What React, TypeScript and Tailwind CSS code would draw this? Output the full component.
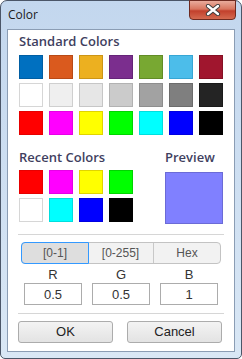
const standard = [
  ['bg-[#0070c0] border-[#005ea3]', 'bg-[#da5a1e] border-[#b84a16]', 'bg-[#ecb020] border-[#cc9516]', 'bg-[#7b2e8e] border-[#652478]', 'bg-[#78a832] border-[#628c26]', 'bg-[#4cbdea] border-[#36a6d4]', 'bg-[#a0162e] border-[#861024]'],
  ['bg-white border-[#d6d6d6]', 'bg-[#efefef] border-[#cfcfcf]', 'bg-[#e6e6e6] border-[#c6c6c6]', 'bg-[#cbcbcb] border-[#b2b2b2]', 'bg-[#a2a2a2] border-[#8e8e8e]', 'bg-[#7f7f7f] border-[#6c6c6c]', 'bg-[#242424] border-[#1a1a1a]'],
  ['bg-[#ff0000] border-[#e60000]', 'bg-[#ff00ff] border-[#e600e6]', 'bg-[#ffff00] border-[#e0d400]', 'bg-[#00ff00] border-[#00d400]', 'bg-[#00ffff] border-[#00dede]', 'bg-[#0000ff] border-[#0000e0]', 'bg-black border-black'],
]

const recent = [
  'bg-[#ff0000] border-[#e60000]', 'bg-[#ff00ff] border-[#e600e6]', 'bg-[#ffff00] border-[#e0d400]', 'bg-[#00ff00] border-[#00d400]',
  'bg-white border-[#d6d6d6]', 'bg-[#00ffff] border-[#00dede]', 'bg-[#0000ff] border-[#0000e0]', 'bg-black border-black',
]

function Swatch({ cls }: { cls: string }) {
  return <div className={`w-[24px] h-[24px] border ${cls}`} />
}

function Heading({ children }: { children: React.ReactNode }) {
  return (
    <div className="text-[13px] leading-[17px] font-semibold text-[#3f3f5f] font-['Open_Sans',sans-serif]">
      {children}
    </div>
  )
}

export default function App() {
  return (
    <div className="relative w-[242px] h-[359px] flex flex-col rounded-t-[7px] rounded-b-[5px] border border-[#4b5668] bg-[linear-gradient(to_bottom,#c3d7ee,#d9e7f5)] px-[6px] pb-[6px] font-['Liberation_Sans',Arial,sans-serif]">
      {/* title bar */}
      <div className="h-[28px] pl-[1px] pt-[6px] text-[12px] leading-[16px] text-[#1b1b1b] font-['Open_Sans',sans-serif]">
        Color
      </div>
      <div className="absolute top-[-1px] right-[5px] w-[47px] h-[20px] rounded-b-[4px] border border-[#6e2a20] bg-[linear-gradient(to_bottom,#e9ab9c_0%,#d8765f_45%,#c2402c_55%,#d46a50_100%)] flex items-center justify-center">
        <svg width="16" height="12" viewBox="0 0 16 12">
          <path d="M3 2 L13 10 M13 2 L3 10" stroke="#3b3b3b" strokeWidth="4.2" strokeLinecap="round" />
          <path d="M3 2 L13 10 M13 2 L3 10" stroke="#ffffff" strokeWidth="2.4" strokeLinecap="round" />
        </svg>
      </div>

      {/* content panel */}
      <div className="flex-1 flex flex-col border border-[#8b9db4] bg-white px-[10px]">
        <div className="pt-[3px] pl-[1px]">
          <Heading>Standard Colors</Heading>
        </div>
        <div className="mt-[5px] ml-[1px] grid grid-cols-[repeat(7,24px)] gap-x-[6px] gap-y-[4px]">
          {standard.flat().map((c, i) => (
            <Swatch key={i} cls={c} />
          ))}
        </div>

        <div className="mt-[14px] flex justify-between">
          <div className="pl-[1px]">
            <Heading>Recent Colors</Heading>
            <div className="mt-[4px] grid grid-cols-[repeat(4,24px)] gap-x-[6px] gap-y-[4px]">
              {recent.map((c, i) => (
                <Swatch key={i} cls={c} />
              ))}
            </div>
          </div>
          <div className="w-[58px] mr-[1px]">
            <Heading>Preview</Heading>
            <div className="mt-[6px] h-[52px] border border-[#6b6bd6] bg-[#8080ff]" />
          </div>
        </div>

        <div className="mt-[10px] h-px bg-[#d6d6d6]" />

        {/* range tabs */}
        <div className="mt-[7px] mx-[3px] h-[22px] grid grid-cols-3 rounded-[4px] border border-[#c3c3c3] bg-[#f2f2f2] text-[12px] text-[#555]">
          <div className="-m-px flex items-center justify-center rounded-l-[4px] border border-[#3399ff] bg-[#dedede]">[0-1]</div>
          <div className="flex items-center justify-center border-r border-[#c8c8c8]">[0-255]</div>
          <div className="flex items-center justify-center">Hex</div>
        </div>

        <div className="mt-[3px] px-[6px] grid grid-cols-3 gap-x-[10px] text-[13px] text-[#333]">
          {[['R', '0.5'], ['G', '0.5'], ['B', '1']].map(([l, v]) => (
            <div key={l} className="flex flex-col items-center">
              <div className="leading-[16px]">{l}</div>
              <div className="w-full h-[22px] border border-[#acacac] flex items-center justify-center leading-none">
                {v}
              </div>
            </div>
          ))}
        </div>

        <div className="mt-[8px] h-px bg-[#d6d6d6]" />

        <div className="mt-[7px] flex gap-[14px] text-[13px] text-[#222]">
          {['OK', 'Cancel'].map(t => (
            <div
              key={t}
              className="w-[95px] h-[22px] rounded-[3px] border border-[#acacac] bg-[linear-gradient(to_bottom,#f3f3f3,#e3e3e3)] flex items-center justify-center"
            >
              {t}
            </div>
          ))}
        </div>
      </div>
    </div>
  )
}
